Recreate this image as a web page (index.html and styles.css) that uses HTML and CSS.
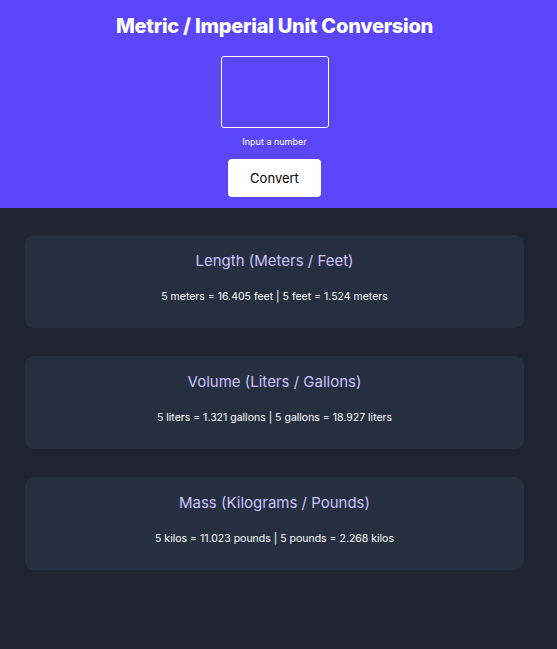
FILE: index.html
```html
<!DOCTYPE html>
<html lang="en">
<head>
<meta charset="utf-8">
<title>Metric / Imperial Unit Conversion</title>
<link rel="stylesheet" href="styles.css">
</head>
<body>
<header class="top">
  <h1 class="title">Metric / Imperial Unit Conversion</h1>
  <input class="num" type="text" aria-label="Input a number">
  <p class="hint">Input a number</p>
  <button class="btn">Convert</button>
</header>
<main class="list">
  <section class="card">
    <h2 class="card-title">Length (Meters / Feet)</h2>
    <p class="card-text">5 meters = 16.405 feet | 5 feet = 1.524 meters</p>
  </section>
  <section class="card">
    <h2 class="card-title">Volume (Liters / Gallons)</h2>
    <p class="card-text">5 liters = 1.321 gallons | 5 gallons = 18.927 liters</p>
  </section>
  <section class="card">
    <h2 class="card-title">Mass (Kilograms / Pounds)</h2>
    <p class="card-text">5 kilos = 11.023 pounds | 5 pounds = 2.268 kilos</p>
  </section>
</main>
</body>
</html>
```
FILE: styles.css
```css
* { box-sizing: border-box; }
html, body { margin: 0; padding: 0; }
body {
  background: #1f2530;
  font-family: Inter, "Noto Sans", sans-serif;
  min-height: 649px;
}
.top {
  background: #5b46f9;
  height: 208px;
  display: flex;
  flex-direction: column;
  align-items: center;
  padding: 14px 8px 0 0;
}
.title {
  margin: 0;
  color: #fff;
  font-size: 20px;
  font-weight: 800;
  letter-spacing: -0.25px;
  line-height: 24px;
}
.num {
  margin-top: 18px;
  width: 108px;
  height: 72px;
  background: transparent;
  border: 1px solid #fff;
  border-radius: 3px;
  outline: none;
}
.hint {
  margin: 8px 0 0;
  color: #fff;
  font-size: 9px;
  line-height: 12px;
}
.btn {
  margin-top: 11px;
  width: 93px;
  height: 38px;
  background: #fff;
  color: #000;
  border: none;
  border-radius: 4px;
  font-family: Inter, sans-serif;
  font-size: 13px;
}
.list {
  display: flex;
  flex-direction: column;
  gap: 28px;
  padding: 27px 33px 0 25px;
}
.card {
  background: #252f3f;
  border-radius: 9px;
  height: 93px;
  display: flex;
  flex-direction: column;
  align-items: center;
  padding-top: 17px;
}
.card-title {
  margin: 0;
  color: #ccc1ff;
  font-size: 15px;
  font-weight: 400;
  line-height: 18px;
}
.card-text {
  margin: 20px 0 0;
  color: #fff;
  font-size: 10.5px;
  line-height: 14px;
}
```
